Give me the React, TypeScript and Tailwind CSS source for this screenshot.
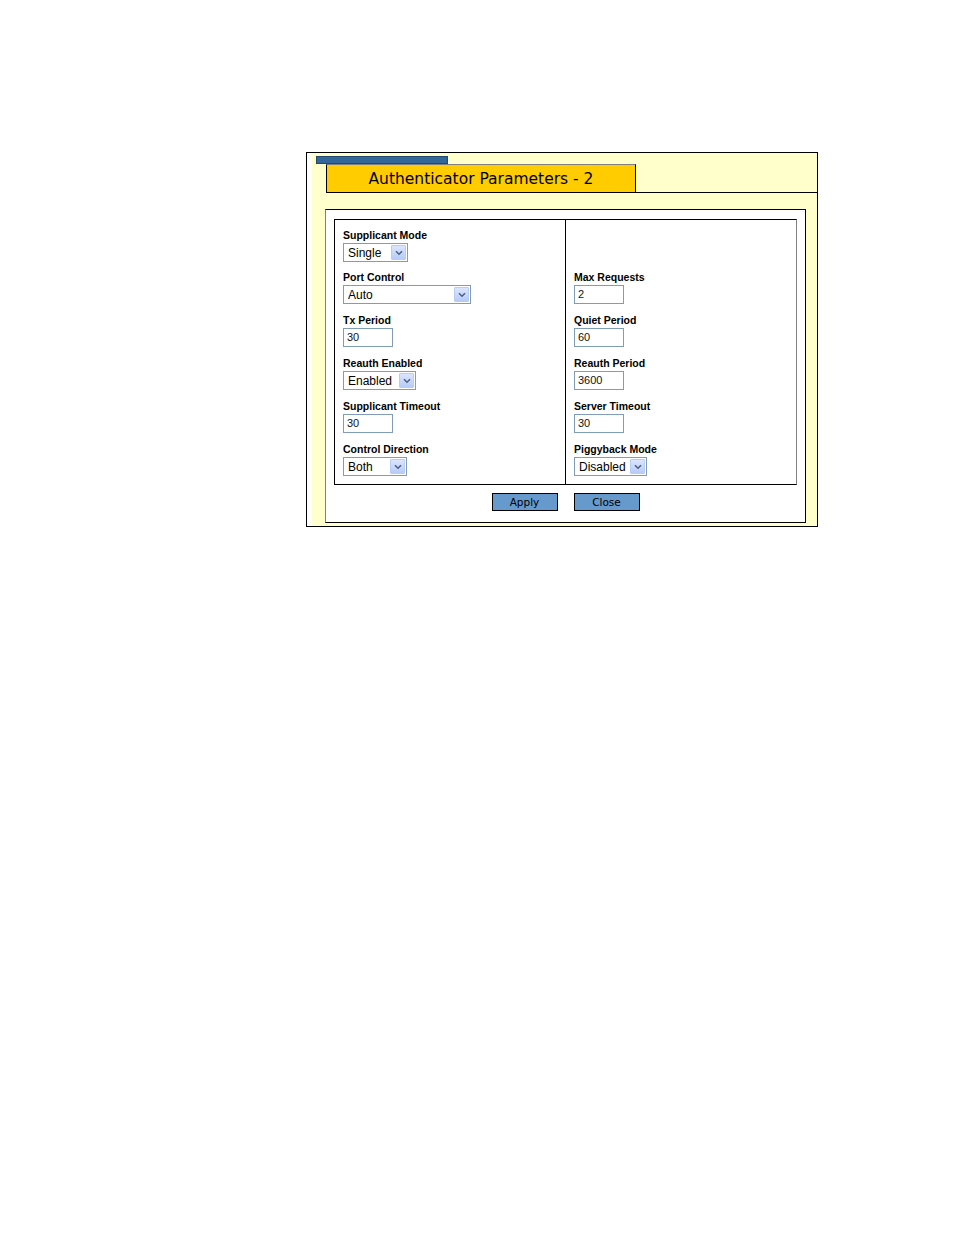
import React from 'react';

type Field =
    | { kind: 'select'; label: string; value: string; width: string }
    | { kind: 'input'; label: string; value: string }
    | null;

const leftFields: Field[] = [
    { kind: 'select', label: 'Supplicant Mode', value: 'Single', width: 'w-[65px]' },
    { kind: 'select', label: 'Port Control', value: 'Auto', width: 'w-[128px]' },
    { kind: 'input', label: 'Tx Period', value: '30' },
    { kind: 'select', label: 'Reauth Enabled', value: 'Enabled', width: 'w-[73px]' },
    { kind: 'input', label: 'Supplicant Timeout', value: '30' },
    { kind: 'select', label: 'Control Direction', value: 'Both', width: 'w-[64px]' },
];

const rightFields: Field[] = [
    null,
    { kind: 'input', label: 'Max Requests', value: '2' },
    { kind: 'input', label: 'Quiet Period', value: '60' },
    { kind: 'input', label: 'Reauth Period', value: '3600' },
    { kind: 'input', label: 'Server Timeout', value: '30' },
    { kind: 'select', label: 'Piggyback Mode', value: 'Disabled', width: 'w-[73px]' },
];

const Chevron = () => (
    <svg width="8" height="6" viewBox="0 0 8 6">
        <path d="M1 1.2 L4 4.2 L7 1.2" fill="none" stroke="#4d6185" strokeWidth="1.6" />
    </svg>
);

const FakeSelect = ({ value, width }: { value: string; width: string }) => (
    <div className={`${width} h-[19px] border border-[#7f9db9] bg-white flex items-center`}>
        <span className="flex-1 pl-[4px] text-[12px] leading-none text-black font-['Liberation_Sans',Arial,sans-serif]">{value}</span>
        <div className="w-[15px] h-[15px] mr-[1px] rounded-[1px] border border-[#b8ccf5] bg-gradient-to-b from-[#dbe6fd] to-[#b7cbf8] flex items-center justify-center">
            <Chevron />
        </div>
    </div>
);

const FakeInput = ({ value }: { value: string }) => (
    <div className="w-[50px] h-[19px] border border-[#7f9db9] bg-white flex items-center pl-[3px]">
        <span className="text-[11px] leading-none text-[#111] font-['Liberation_Sans',Arial,sans-serif]">{value}</span>
    </div>
);

const FieldBlock = ({ field, index, last }: { field: Field; index: number; last: boolean }) => (
    <div className={`h-[33px] ${last ? '' : index === 0 ? 'mb-[9px]' : 'mb-[10px]'}`}>
        {field && (
            <>
                <div className="h-[13px] leading-[13px] text-[10.5px] font-bold text-black font-['Liberation_Sans',Arial,sans-serif]">
                    {field.label}
                </div>
                <div className="mt-[1px]">
                    {field.kind === 'select' ? (
                        <FakeSelect value={field.value} width={field.width} />
                    ) : (
                        <FakeInput value={field.value} />
                    )}
                </div>
            </>
        )}
    </div>
);

const App: React.FC = () => {
    return (
        <div className="w-[954px] h-[1235px] bg-white pt-[152px] pl-[306px]">
            <div className="w-[512px] h-[375px] border border-black flex">
                {/* thin white strip on the left */}
                <div className="w-[5px] bg-white" />

                <div className="flex-1 bg-[#ffffcc] flex flex-col">
                    {/* header tabs */}
                    <div className="pt-[3px]">
                        <div className="ml-[4px] w-[132px] h-[8px] bg-[#336699] border border-[#24486d]" />
                        <div className="ml-[14px] border-b border-black">
                            <div className="w-[310px] h-[28px] pt-[2px] bg-[#ffcc00] border-l border-r border-t border-l-black border-r-black border-t-[#808080] flex items-center justify-center">
                                <span className="text-[15.5px] text-black font-['DejaVu_Sans',Verdana,sans-serif]">
                                    Authenticator Parameters - 2
                                </span>
                            </div>
                        </div>
                    </div>

                    {/* main panel */}
                    <div className="mt-[16px] ml-[13px] mr-[11px] bg-white border border-black border-l-[#808080] pt-[9px] px-[8px] pb-[11px]">
                        <div className="flex border border-black border-r-[#808080]">
                            <div className="w-[231px] border-r border-black pl-[8px] pt-[9px] pb-[8px]">
                                {leftFields.map((f, i) => (
                                    <FieldBlock key={i} field={f} index={i} last={i === leftFields.length - 1} />
                                ))}
                            </div>
                            <div className="flex-1 pl-[8px] pt-[9px] pb-[8px]">
                                {rightFields.map((f, i) => (
                                    <FieldBlock key={i} field={f} index={i} last={i === rightFields.length - 1} />
                                ))}
                            </div>
                        </div>

                        <div className="mt-[8px] flex justify-center gap-[16px]">
                            <button className="w-[66px] h-[18px] bg-[#6699cc] border border-black text-[10.5px] leading-none text-black font-['DejaVu_Sans',Verdana,sans-serif]">
                                Apply
                            </button>
                            <button className="w-[66px] h-[18px] bg-[#6699cc] border border-black text-[10.5px] leading-none text-black font-['DejaVu_Sans',Verdana,sans-serif]">
                                Close
                            </button>
                        </div>
                    </div>
                </div>
            </div>
        </div>
    );
};

export default App;
